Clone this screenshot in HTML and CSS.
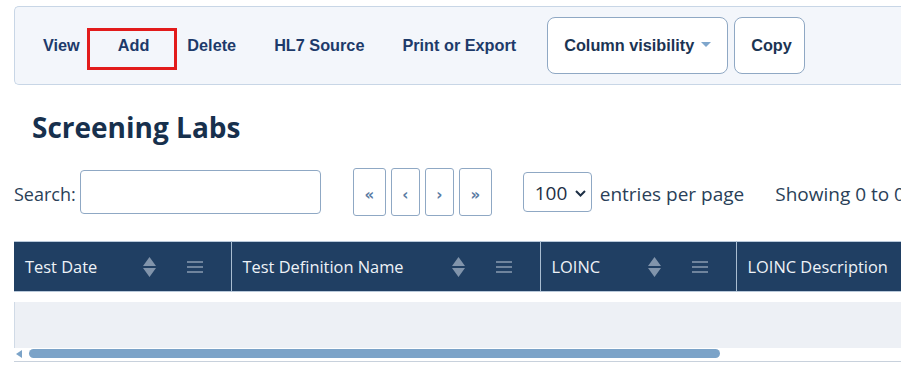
FILE: index.html
```html
<!DOCTYPE html>
<html lang="en">
<head>
    <meta charset="UTF-8">
    <title>Screening Labs</title>
    <link rel="stylesheet" href="styles.css">
</head>
<body>
    <div class="page">
        <div class="toolbar">
            <button class="tool-btn">View</button>
            <button class="tool-btn tool-btn-add">Add<span class="highlight"></span></button>
            <button class="tool-btn">Delete</button>
            <button class="tool-btn">HL7 Source</button>
            <button class="tool-btn">Print or Export</button>
            <button class="box-btn box-btn-colvis">Column visibility
                <svg class="caret" width="10" height="6" viewBox="0 0 10 6"><path d="M0 0 L10 0 L5 5 Z" fill="#7fa6cc"/></svg>
            </button>
            <button class="box-btn">Copy</button>
        </div>

        <h1 class="title">Screening Labs</h1>

        <div class="controls">
            <label class="search">Search:<input type="text" class="search-input"></label>
            <div class="pager">
                <button class="page-btn page-btn-wide">&laquo;</button>
                <button class="page-btn">&lsaquo;</button>
                <button class="page-btn">&rsaquo;</button>
                <button class="page-btn page-btn-wide">&raquo;</button>
            </div>
            <div class="page-size">
                <span>100</span>
                <svg width="11" height="7" viewBox="0 0 11 7"><path d="M1 1 L5.5 5.5 L10 1" fill="none" stroke="#1d2f45" stroke-width="2"/></svg>
            </div>
            <span class="per-page">entries per page</span>
            <span class="info">Showing 0 to 0 of 0 entries</span>
        </div>

        <div class="grid-wrap">
            <table class="grid">
                <thead>
                    <tr>
                        <th class="col-date">
                            <div class="th-inner"><span class="th-label">Test Date</span>
                                <svg class="sort" width="13" height="20" viewBox="0 0 13 20"><path d="M6.5 0 L13 9 L0 9 Z M0 11 L13 11 L6.5 20 Z" fill="#8194ab"/></svg>
                                <svg class="menu" width="16" height="12" viewBox="0 0 16 12"><path d="M0 1 H16 M0 6 H16 M0 11 H16" stroke="#6f849d" stroke-width="2"/></svg>
                            </div>
                        </th>
                        <th class="col-name">
                            <div class="th-inner"><span class="th-label">Test Definition Name</span>
                                <svg class="sort" width="13" height="20" viewBox="0 0 13 20"><path d="M6.5 0 L13 9 L0 9 Z M0 11 L13 11 L6.5 20 Z" fill="#8194ab"/></svg>
                                <svg class="menu" width="16" height="12" viewBox="0 0 16 12"><path d="M0 1 H16 M0 6 H16 M0 11 H16" stroke="#6f849d" stroke-width="2"/></svg>
                            </div>
                        </th>
                        <th class="col-loinc">
                            <div class="th-inner"><span class="th-label">LOINC</span>
                                <svg class="sort" width="13" height="20" viewBox="0 0 13 20"><path d="M6.5 0 L13 9 L0 9 Z M0 11 L13 11 L6.5 20 Z" fill="#8194ab"/></svg>
                                <svg class="menu" width="16" height="12" viewBox="0 0 16 12"><path d="M0 1 H16 M0 6 H16 M0 11 H16" stroke="#6f849d" stroke-width="2"/></svg>
                            </div>
                        </th>
                        <th class="col-desc">
                            <div class="th-inner"><span class="th-label">LOINC Description</span></div>
                        </th>
                    </tr>
                </thead>
            </table>
            <div class="empty-row"></div>
            <div class="hscroll">
                <svg class="hscroll-arrow" width="6" height="8" viewBox="0 0 6 8"><path d="M6 0 L6 8 L0 4 Z" fill="#7ba3c8"/></svg>
                <div class="hscroll-thumb"></div>
            </div>
        </div>
    </div>
</body>
</html>
```

FILE: styles.css
```css
body {
    margin: 0;
    font-family: 'Open Sans', 'Noto Sans', sans-serif;
    background-color: #fff;
    overflow: hidden;
}
.page {
    padding: 6px 0 0 14px;
}
.toolbar {
    position: relative;
    display: flex;
    align-items: center;
    background-color: #f3f6fb;
    border: 1px solid #c8d6e6;
    border-right: none;
    border-radius: 5px 0 0 5px;
    padding: 10px 0 10px 9px;
    white-space: nowrap;
}
.toolbar > * {
    flex-shrink: 0;
}
.tool-btn, .box-btn {
    font-family: 'Liberation Sans', Arial, sans-serif;
    font-weight: bold;
    font-size: 16.25px;
    color: #1d3a6a;
    background: none;
    border: none;
    height: 57px;
    cursor: pointer;
}
.tool-btn {
    padding: 0 19px;
}
.tool-btn-add {
    position: relative;
}
.highlight {
    position: absolute;
    left: -12px;
    top: 11px;
    width: 90px;
    height: 42px;
    box-sizing: border-box;
    border: 3px solid #e21b1b;
}
.box-btn {
    background-color: #fff;
    border: 1px solid #8fa8c4;
    border-radius: 8px;
    padding: 0 16px;
    color: #1b3453;
}
.box-btn-colvis {
    margin-left: 12px;
    width: 181px;
    text-align: left;
}
.box-btn-colvis .caret {
    margin-left: 2px;
    vertical-align: 3px;
}
.box-btn + .box-btn {
    margin-left: 6px;
    width: 71px;
}
.title {
    margin: 20px 0 0 18px;
    font-size: 28px;
    font-weight: bold;
    color: #17304d;
    line-height: 44px;
}
.controls {
    display: flex;
    align-items: center;
    margin-top: 19px;
    height: 48px;
    white-space: nowrap;
    font-size: 19px;
    color: #2a3f58;
}
.controls > * {
    flex-shrink: 0;
}
.search {
    display: flex;
    align-items: center;
    gap: 4px;
    font-size: 18px;
    padding-top: 3px;
}
.search-input {
    width: 241px;
    height: 44px;
    box-sizing: border-box;
    border: 1px solid #8fa8c4;
    border-radius: 4px;
    margin: -3px 0 0 0;
}
.pager {
    display: flex;
    gap: 5px;
    margin-left: 32px;
}
.page-btn {
    width: 29px;
    height: 48px;
    background: #fff;
    border: 1px solid #8fa8c4;
    border-radius: 3px;
    color: #5a7ba3;
    font-family: 'DejaVu Sans', sans-serif;
    font-weight: bold;
    font-size: 15px;
    padding: 6px 0 0 0;
}
.page-btn-wide {
    width: 33px;
}
.page-size {
    display: flex;
    align-items: center;
    justify-content: space-between;
    margin-left: 31px;
    width: 69px;
    height: 40px;
    box-sizing: border-box;
    border: 1px solid #8fa8c4;
    border-radius: 4px;
    padding: 2px 5px 0 11px;
    color: #1d2f45;
}
.per-page {
    margin-left: 8px;
    padding-top: 3px;
}
.info {
    margin-left: 31px;
    padding-top: 3px;
}
.grid-wrap {
    margin-top: 25px;
    width: 1400px;
}
.grid {
    border-collapse: collapse;
    table-layout: fixed;
    width: 1400px;
}
.grid th {
    background-color: #203f63;
    color: #eef2f7;
    font-family: 'Open Sans', 'Noto Sans', sans-serif;
    font-weight: normal;
    font-size: 16.4px;
    text-align: left;
    height: 50px;
    padding: 0 0 0 11px;
    border-top: 1px solid #b9c9da;
    border-bottom: 1px solid #b9c9da;
    border-right: 1px solid #a9bdd1;
    box-sizing: border-box;
}
.col-date { width: 217px; }
.col-name { width: 309px; }
.col-loinc { width: 196px; }
.th-inner {
    display: flex;
    align-items: center;
}
.th-label {
    flex: 1;
}
.menu {
    margin: 0 28px 0 31px;
}
.empty-row {
    margin-top: 10px;
    height: 46px;
    background-color: #edf0f5;
    border-left: 1px solid #d0dae6;
}
.hscroll {
    display: flex;
    align-items: center;
    height: 9px;
    margin-top: 1px;
    padding-bottom: 3px;
    border-bottom: 1px solid #c8d1dc;
    width: 887px;
}
.hscroll-arrow {
    margin-left: 2px;
}
.hscroll-thumb {
    margin-left: 7px;
    width: 691px;
    height: 9px;
    border-radius: 5px;
    background-color: #7ba3c8;
}
```
